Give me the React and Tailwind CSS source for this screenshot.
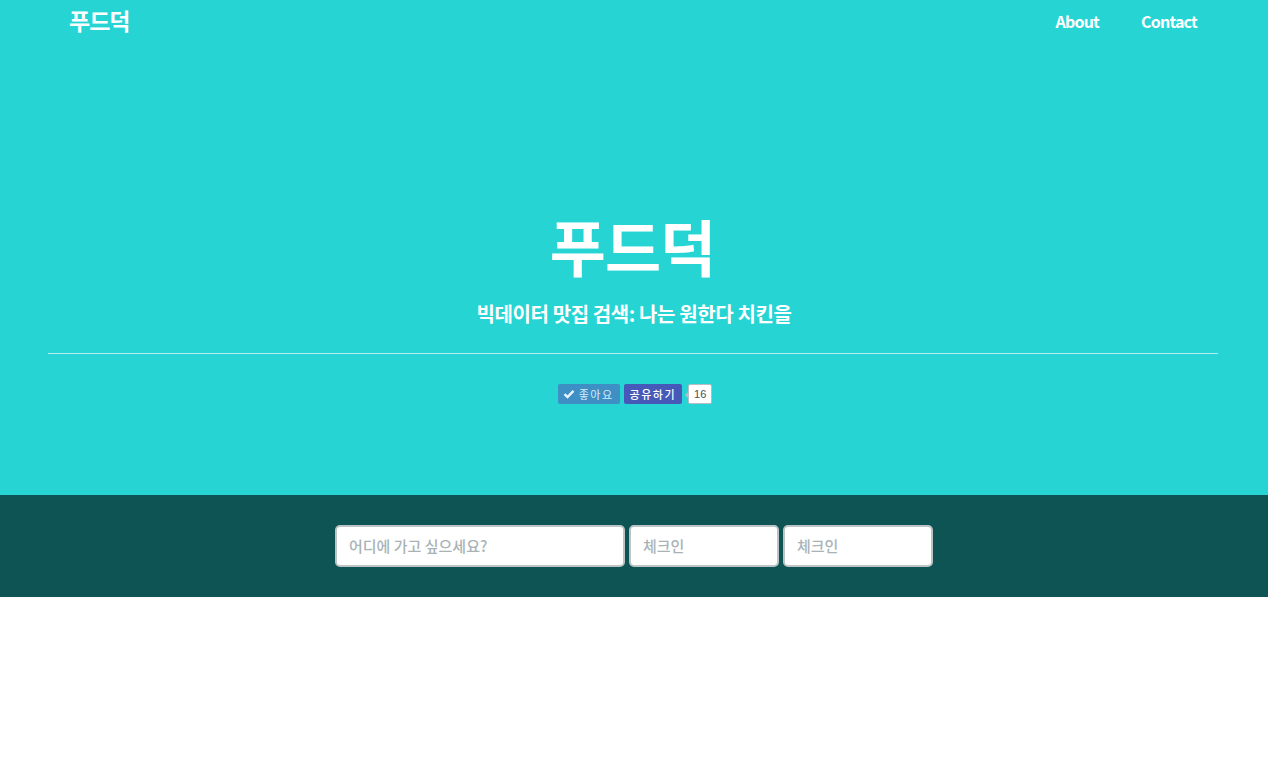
import React from "react";

const font = { fontFamily: '"Noto Sans CJK KR", "Noto Sans", sans-serif' };

export default function App() {
  return (
    <div className="w-full bg-white min-h-[764px]" style={font}>
      <div className="bg-[#26d4d4] h-[495px] flex flex-col">
        <nav className="h-[45px] flex items-center justify-between pl-[69px] pr-[71px] pb-[4px]">
          <div className="text-white font-bold text-[23px] tracking-[-1px] leading-none">푸드덕</div>
          <div className="flex gap-[42px] text-white font-bold text-[16px] tracking-[-0.8px]">
            <span>About</span>
            <span>Contact</span>
          </div>
        </nav>
        <div className="flex flex-col items-center mt-[170px]">
          <h1 className="text-white font-bold text-[61px] leading-none tracking-[-1px] pr-[3px]">푸드덕</h1>
          <h2 className="text-white font-bold text-[20px] tracking-[-0.4px] mt-[28px] leading-none">빅데이터 맛집 검색: 나는 원한다 치킨을</h2>
        </div>
        <div className="ml-[48px] mr-[50px] mt-[29px] border-t border-[#b5eeee]"></div>
        <div className="flex justify-center items-center mt-[30px] gap-[4px] pl-[2px]">
          <div className="h-[20px] pl-[5px] pr-[6px] bg-[#3d8fc4] rounded-[2px] flex items-center gap-[4px] text-[#d9ecf7] text-[11px] tracking-[1.5px]">
            <svg width="12" height="10" viewBox="0 0 12 10"><path d="M1.5 5.2 L4.5 8 L10.5 1.8" stroke="#e7f3fa" strokeWidth="2.4" fill="none" /></svg>
            <span>좋아요</span>
          </div>
          <div className="h-[20px] px-[6px] bg-[#4659b8] rounded-[2px] flex items-center text-white text-[11px] font-medium tracking-[1.5px]">공유하기</div>
          <div className="relative ml-[2px] h-[20px] px-[5px] bg-white border border-[#b7bcc6] rounded-[2px] flex items-center text-[11px] text-[#4b4f56]" style={{ fontFamily: '"Liberation Sans", sans-serif' }}>
            <span className="absolute left-[-4px] top-[6px] w-0 h-0 border-y-[4px] border-y-transparent border-r-[4px] border-r-[#b7bcc6]"></span>
            16
          </div>
        </div>
      </div>
      <div className="bg-[#0e5454] h-[102px] flex justify-center items-center gap-[4px]">
        <div className="w-[290px] h-[42px] bg-white border-2 border-[#bcc4c6] rounded-[5px] flex items-center px-[12px] text-[15px] font-medium text-[#a9b3b6]">어디에 가고 싶으세요?</div>
        <div className="w-[150px] h-[42px] bg-white border-2 border-[#bcc4c6] rounded-[5px] flex items-center px-[12px] text-[15px] font-medium text-[#a9b3b6]">체크인</div>
        <div className="w-[150px] h-[42px] bg-white border-2 border-[#bcc4c6] rounded-[5px] flex items-center px-[12px] text-[15px] font-medium text-[#a9b3b6]">체크인</div>
      </div>
    </div>
  );
}
